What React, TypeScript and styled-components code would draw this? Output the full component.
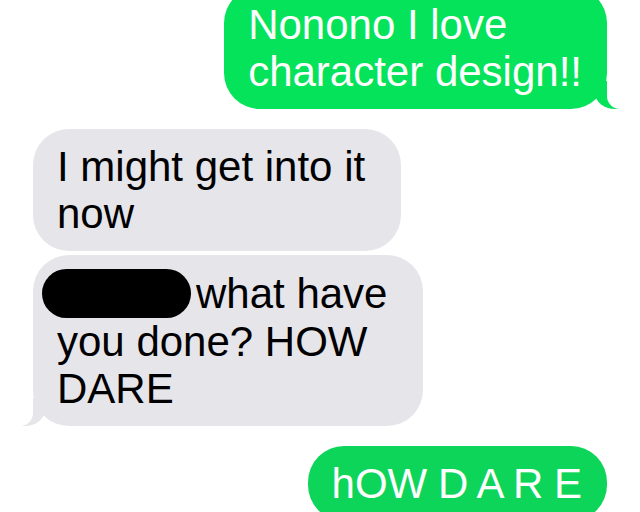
import styled, { createGlobalStyle, css } from 'styled-components';

const GlobalStyle = createGlobalStyle`
  html, body {
    margin: 0;
    padding: 0;
    background: #ffffff;
    overflow: hidden;
  }
  body {
    font-family: 'Liberation Sans', Arial, sans-serif;
  }
`;

const Screen = styled.div`
  width: 640px;
  height: 512px;
  overflow: hidden;
  background: #ffffff;
`;

const Thread = styled.div`
  display: flex;
  flex-direction: column;
  padding: 0 33px;
  margin-top: -13px;
`;

const Group = styled.div<{ $sent: boolean }>`
  display: flex;
  flex-direction: column;
  align-items: ${({ $sent }) => ($sent ? 'flex-end' : 'flex-start')};
  gap: 4px;
  margin-bottom: 20px;
`;

const tail = (color: string, sent: boolean) => css`
  &::before {
    content: '';
    position: absolute;
    bottom: 0;
    height: 28px;
    width: 24px;
    background: ${color};
    ${sent
      ? css`
          right: -12px;
          border-bottom-left-radius: 20px 16px;
        `
      : css`
          left: -12px;
          border-bottom-right-radius: 20px 16px;
        `}
  }
  &::after {
    content: '';
    position: absolute;
    bottom: 0;
    width: 26px;
    height: 28px;
    background: #ffffff;
    ${sent
      ? css`
          right: -26px;
          border-bottom-left-radius: 13px;
        `
      : css`
          left: -26px;
          border-bottom-right-radius: 13px;
        `}
  }
`;

const Bubble = styled.div<{ $sent: boolean; $tail?: boolean; $shade?: string }>`
  position: relative;
  box-sizing: border-box;
  white-space: nowrap;
  font-size: 42px;
  line-height: 47px;
  border-radius: 36px;
  padding: ${({ $sent }) => ($sent ? '14px 25px 14px 24px' : '14px 36px 14px 24px')};
  background: ${({ $sent, $shade }) => ($sent ? $shade || '#08e25a' : '#e5e5ea')};
  color: ${({ $sent }) => ($sent ? '#ffffff' : '#000000')};
  ${({ $tail, $sent, $shade }) =>
    $tail && tail($sent ? $shade || '#08e25a' : '#e5e5ea', $sent)}
`;

const Spaced = styled.span`
  word-spacing: -1px;
`;

const Redacted = styled.span`
  display: inline-block;
  width: 149px;
  height: 49px;
  margin-left: -15px;
  margin-right: 5px;
  vertical-align: -10px;
  border-radius: 25px;
  background: #000000;
`;

export default function App() {
  return (
    <Screen>
      <GlobalStyle />
      <Thread>
        <Group $sent>
          <Bubble $sent $tail $shade="#05e35a">
            Nonono I love
            <br />
            character design!!
          </Bubble>
        </Group>
        <Group $sent={false}>
          <Bubble $sent={false}>
            I might get into it
            <br />
            now
          </Bubble>
          <Bubble $sent={false} $tail>
            <Redacted />
            what have
            <br />
            you done? HOW
            <br />
            DARE
          </Bubble>
        </Group>
        <Group $sent>
          <Bubble $sent $shade="#0dd559">
            <Spaced>hOW D A R E</Spaced>
          </Bubble>
        </Group>
      </Thread>
    </Screen>
  );
}
